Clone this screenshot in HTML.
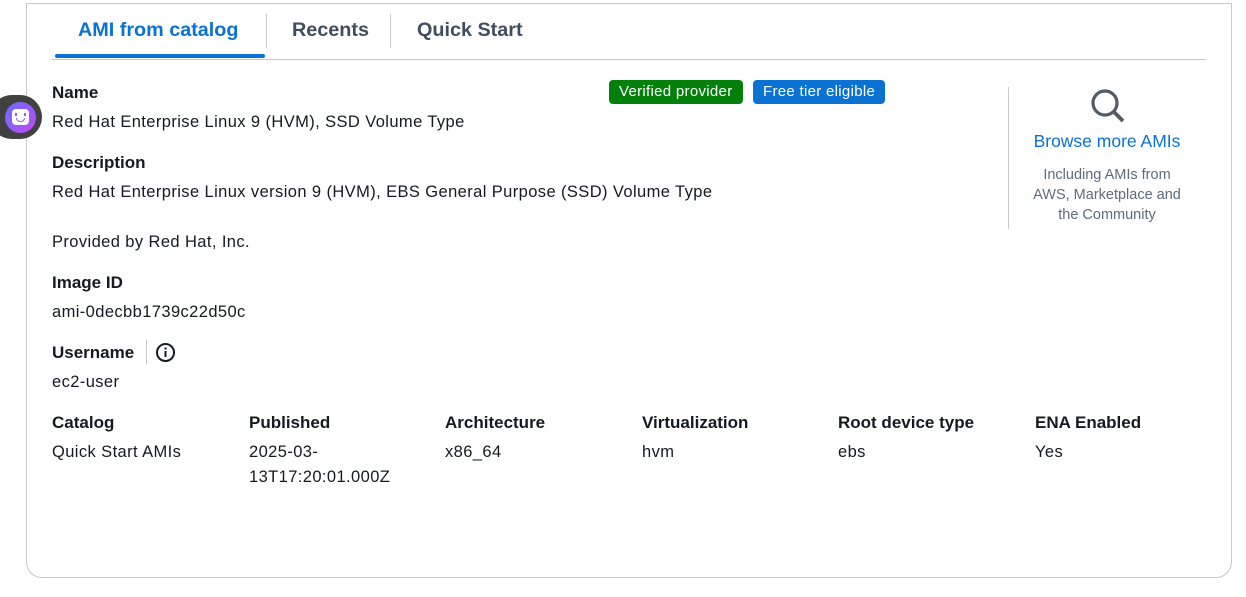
<!DOCTYPE html>
<html><head><meta charset="utf-8"><style>
*{margin:0;padding:0;box-sizing:border-box}
body{width:1246px;height:597px;background:#fff;font-family:"Liberation Sans",sans-serif;color:#16191f;position:relative;overflow:hidden}
.card{position:absolute;left:26px;top:3px;width:1206px;height:575px;border:1px solid #c6c6cd;border-radius:0 0 16px 16px}
.a{position:absolute;white-space:nowrap}
.lb{font-weight:bold;font-size:17px;color:#16191f}
.v{font-size:16.5px;color:#16191f;letter-spacing:0.4px}
.tab{font-weight:bold;font-size:19.8px;color:#414d5c}
.badge{position:absolute;top:80px;height:24px;border-radius:4px;color:#fff;font-size:15px;line-height:24px;padding:0 10px;letter-spacing:0.3px}
</style></head><body>
<div class="card"></div>
<div class="a tab" style="left:78px;top:19px;color:#0972d3">AMI from catalog</div>
<div class="a tab" style="left:292px;top:19px">Recents</div>
<div class="a tab" style="left:417px;top:19px">Quick Start</div>
<div class="a" style="left:266px;top:14px;width:1px;height:34px;background:#c6c6cd"></div>
<div class="a" style="left:390px;top:14px;width:1px;height:34px;background:#c6c6cd"></div>
<div class="a" style="left:52px;top:59px;width:1154px;height:1px;background:#c6c6cd"></div>
<div class="a" style="left:55px;top:54px;width:210px;height:4px;border-radius:2px;background:#0972d3"></div>

<div class="a lb" style="left:52px;top:83px">Name</div>
<div class="a v" style="left:52px;top:113px">Red Hat Enterprise Linux 9 (HVM), SSD Volume Type</div>
<div class="badge" style="left:609px;background:#037f0c">Verified provider</div>
<div class="badge" style="left:753px;background:#0972d3">Free tier eligible</div>
<div class="a lb" style="left:52px;top:153px">Description</div>
<div class="a v" style="left:52px;top:183px">Red Hat Enterprise Linux version 9 (HVM), EBS General Purpose (SSD) Volume Type</div>
<div class="a v" style="left:52px;top:233px">Provided by Red Hat, Inc.</div>
<div class="a lb" style="left:52px;top:273px">Image ID</div>
<div class="a v" style="left:52px;top:303px">ami-0decbb1739c22d50c</div>
<div class="a lb" style="left:52px;top:343px">Username</div>
<div class="a" style="left:146px;top:340px;width:1px;height:24px;background:#c6c6cd"></div>
<svg class="a" style="left:155px;top:342px" width="21" height="21" viewBox="0 0 21 21"><circle cx="10.5" cy="10.5" r="8.5" fill="none" stroke="#16191f" stroke-width="2"/><rect x="9.5" y="9" width="2" height="6" fill="#16191f"/><rect x="9.5" y="5.5" width="2" height="2" fill="#16191f"/></svg>
<div class="a v" style="left:52px;top:373px">ec2-user</div>

<div class="a lb" style="left:52px;top:413px">Catalog</div>
<div class="a v" style="left:52px;top:443px">Quick Start AMIs</div>
<div class="a lb" style="left:249px;top:413px">Published</div>
<div class="a v" style="left:249px;top:443px">2025-03-</div>
<div class="a v" style="left:249px;top:468px">13T17:20:01.000Z</div>
<div class="a lb" style="left:445px;top:413px">Architecture</div>
<div class="a v" style="left:445px;top:443px">x86_64</div>
<div class="a lb" style="left:642px;top:413px">Virtualization</div>
<div class="a v" style="left:642px;top:443px">hvm</div>
<div class="a lb" style="left:838px;top:413px">Root device type</div>
<div class="a v" style="left:838px;top:443px">ebs</div>
<div class="a lb" style="left:1035px;top:413px">ENA Enabled</div>
<div class="a v" style="left:1035px;top:443px">Yes</div>

<div class="a" style="left:1008px;top:87px;width:1px;height:142px;background:#c6c6cd"></div>
<svg class="a" style="left:1088px;top:88px" width="40" height="40" viewBox="0 0 40 40"><circle cx="17" cy="15" r="12" fill="none" stroke="#545b64" stroke-width="3.2"/><line x1="25.5" y1="23.5" x2="35" y2="33" stroke="#545b64" stroke-width="3.8"/></svg>
<div class="a" style="left:1008px;width:198px;text-align:center;top:131px;font-size:17.5px;color:#0972d3">Browse more AMIs</div>
<div class="a" style="left:1008px;width:198px;text-align:center;top:165px;font-size:14.5px;line-height:20px;color:#5f6b7a;white-space:normal">Including AMIs from<br>AWS, Marketplace and<br>the Community</div>

<div class="a" style="left:-10px;top:95px;width:52px;height:44px;border-radius:22px;background:#414141"></div>
<div class="a" style="left:5px;top:102px;width:31px;height:31px;border-radius:50%;background:linear-gradient(135deg,#6b6bff,#c04cf0)"></div>
<div class="a" style="left:12px;top:109px;width:17px;height:16px;border-radius:4px;background:#fff"></div>
<div class="a" style="left:15px;top:113px;width:2px;height:3px;background:#9b59f5"></div>
<div class="a" style="left:24px;top:113px;width:2px;height:3px;background:#9b59f5"></div>
<div class="a" style="left:16px;top:118px;width:9px;height:4px;border:1.5px solid #9b59f5;border-top:none;border-radius:0 0 5px 5px"></div>
</body></html>
